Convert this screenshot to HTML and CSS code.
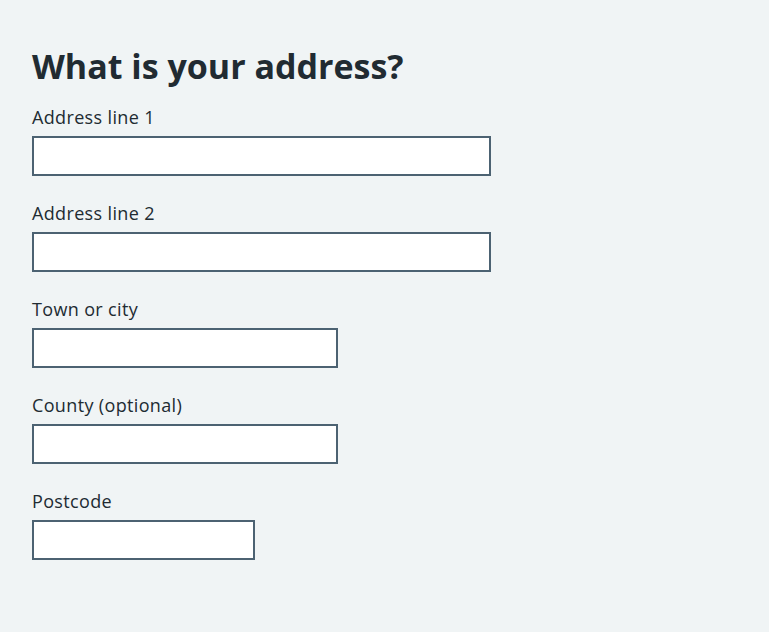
FILE: index.html
```html
<!DOCTYPE html>
<html lang="en">
<head>
<meta charset="utf-8">
<title>What is your address?</title>
<link rel="stylesheet" href="styles.css">
</head>
<body>
<main class="page">
  <fieldset class="fieldset">
    <legend class="legend"><h1 class="heading">What is your address?</h1></legend>
    <div class="form-group">
      <label class="label" for="a1">Address line 1</label>
      <input class="input input-full" id="a1" type="text">
    </div>
    <div class="form-group">
      <label class="label" for="a2">Address line 2</label>
      <input class="input input-full" id="a2" type="text">
    </div>
    <div class="form-group">
      <label class="label" for="town">Town or city</label>
      <input class="input input-2-3" id="town" type="text">
    </div>
    <div class="form-group">
      <label class="label" for="county">County (optional)</label>
      <input class="input input-2-3" id="county" type="text">
    </div>
    <div class="form-group">
      <label class="label" for="pc">Postcode</label>
      <input class="input input-postcode" id="pc" type="text">
    </div>
  </fieldset>
</main>
</body>
</html>
```
FILE: styles.css
```css
html, body {
  margin: 0;
  padding: 0;
  background: #f0f4f5;
  color: #212b32;
  font-family: "Open Sans", "Noto Sans", sans-serif;
}
.page {
  padding: 46px 32px 32px;
}
.fieldset {
  border: 0;
  margin: 0;
  padding: 0;
  min-width: 0;
}
.legend {
  padding: 0;
  margin: 0 0 17px;
}
.heading {
  font-size: 34px;
  line-height: 40px;
  font-weight: 700;
  margin: 0;
}
.form-group {
  display: flex;
  flex-direction: column;
  align-items: flex-start;
  margin-bottom: 23px;
}
.label {
  font-size: 18px;
  line-height: 28px;
  letter-spacing: 0.35px;
  margin-bottom: 5px;
}
.input {
  box-sizing: border-box;
  height: 40px;
  border: 2px solid #4c6272;
  border-radius: 0;
  background: #fff;
  padding: 4px;
  font: inherit;
  margin: 0;
}
.input-full { width: 459px; }
.input-2-3 { width: 306px; }
.input-postcode { width: 223px; }
```
